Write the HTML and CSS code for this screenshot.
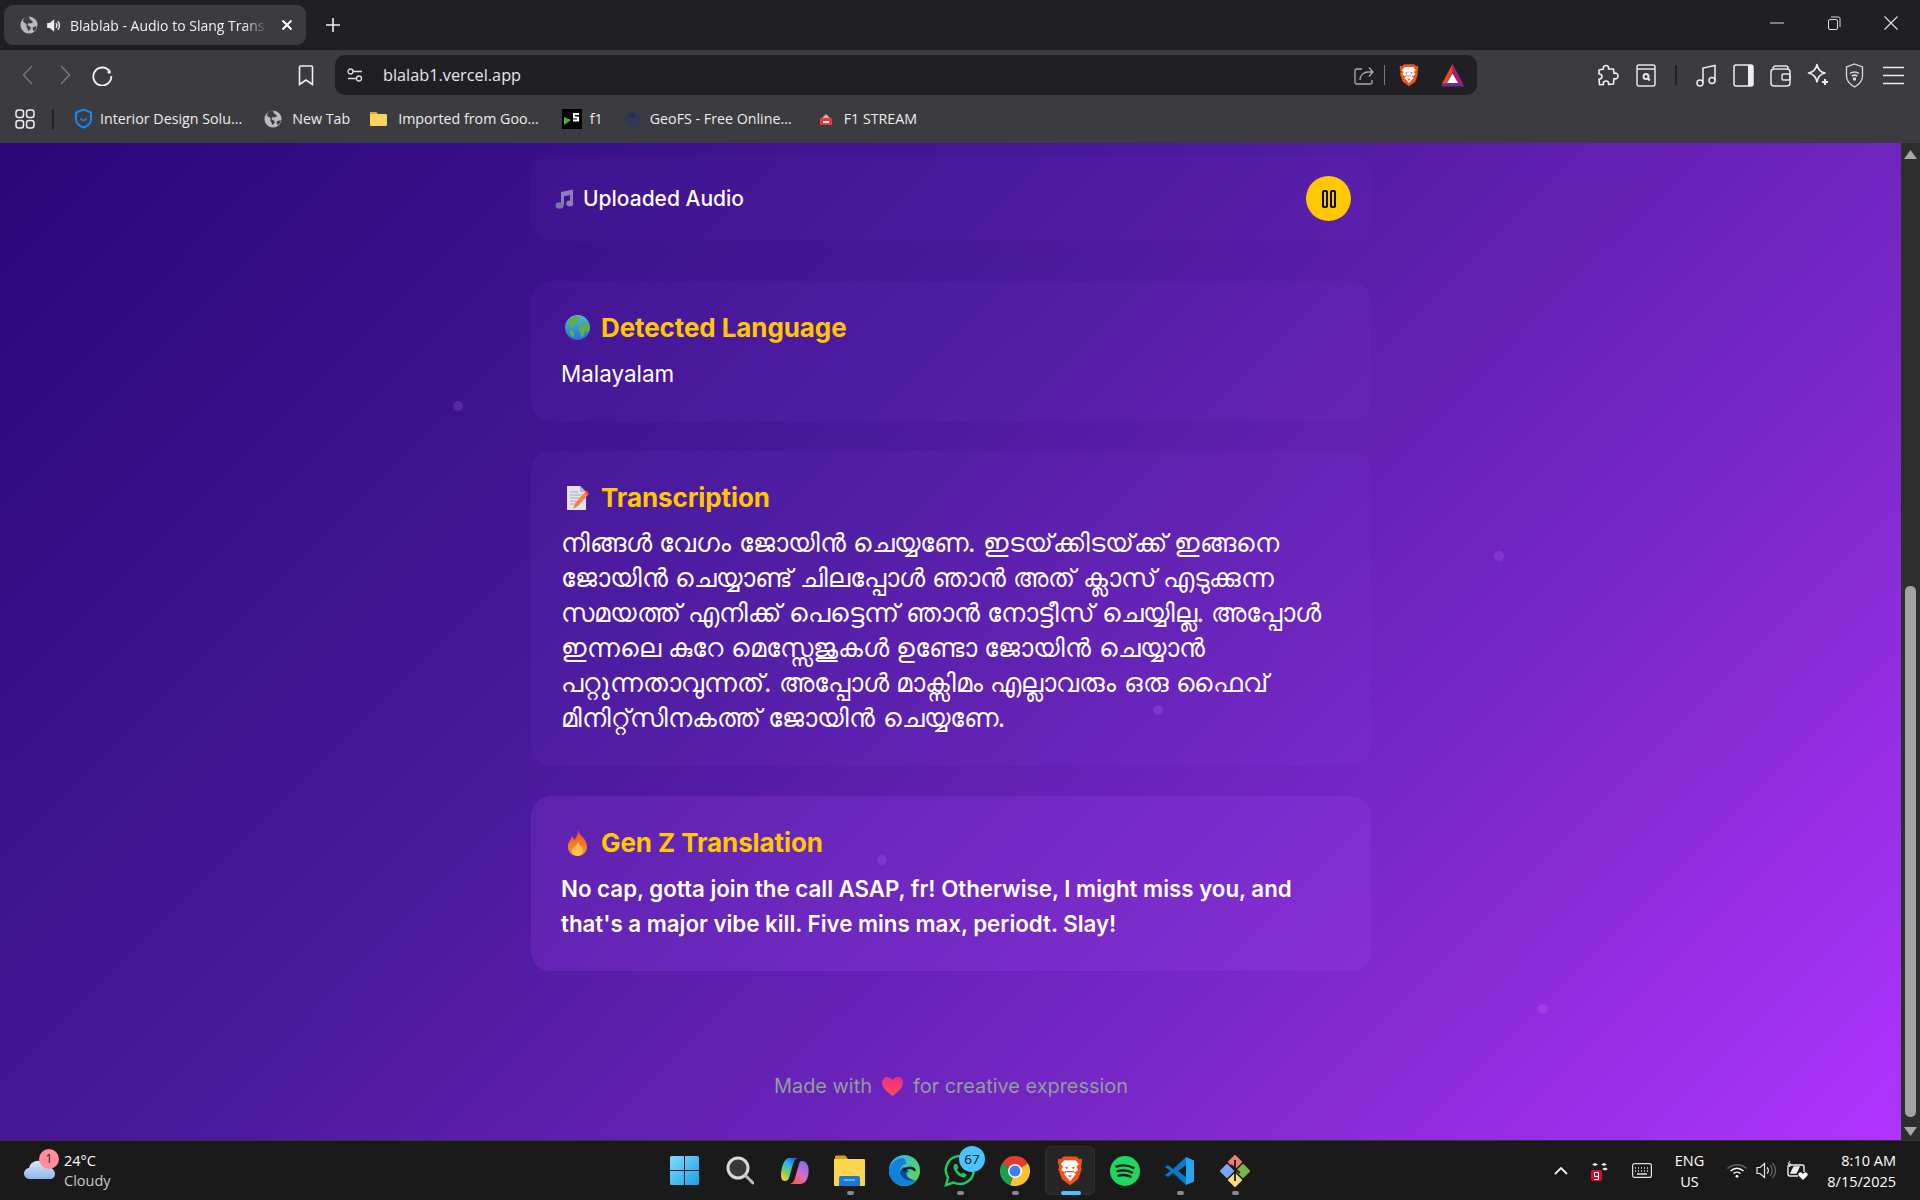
FILE: index.html
```html
<!DOCTYPE html>
<html lang="en">
<head>
<meta charset="utf-8">
<title>Blablab - Audio to Slang Translator</title>
<link rel="stylesheet" href="styles.css">
</head>
<body>
<svg class="defs" width="0" height="0" aria-hidden="true">
  <symbol id="globe" viewBox="0 0 20 20">
    <circle cx="10" cy="10" r="9.5" fill="#b9b9be"/>
    <path d="M6 1.6C4 3 3 5 3.6 6.5c.8 1.6 3 1.4 3.7 3 .5 1.2-.6 2 .3 3.2.8 1 1.2 3 2 4 1.2-.8 2.500-2.200 2.300-3.800-.2-1.300-2-1.300-3-2.400-.8-1-.2-2.300 1-2.500 1.500-.2 2.800.4 3.800-.5 1-1 .1-2.200-1-2.500C10.500 3.500 10 2.300 10.500.6 9 .4 7.300.8 6 1.600z" fill="#3c3c42"/>
    <path d="M14.500 12.500c1-.8 3-.8 4.200-1.500-.3 2.200-1.500 4.400-3.400 5.800-1-1.300-1.700-3.300-.8-4.300z" fill="#3c3c42"/>
  </symbol>
  <symbol id="brave" viewBox="0 0 24 28">
    <path d="M6 1h12l2.500 2.500 2.500-.5v4l-1 3.500.8 2-3.300 9.500L12 27.500 4.500 22 1.200 12.500l.8-2L1 7V3l2.500.5z" fill="#f1511b"/>
    <path d="M7 4.500h10l3 3.500-2 2.500 1.500 3-3 2-1.500-1h-7L7 15.500l-3-2 1.500-3-2-2.500z" fill="#fff"/>
    <path d="M8.500 15.500h7l2 2L12 24l-5.500-6.500z" fill="#fff"/>
    <path d="M10 18.500h4l-2 2z" fill="#f1511b"/>
    <path d="M7.500 10.500l3 .8-2 1.500zM16.500 10.500l-3 .8 2 1.500z" fill="#f1511b"/>
  </symbol>
</svg>

<div class="screen">
  <div class="tabstrip">
    <div class="tab">
      <svg class="tab-globe" width="18" height="18"><use href="#globe"/></svg>
      <svg class="tab-sound" width="15" height="15" viewBox="0 0 16 16" fill="none" stroke="#eee" stroke-width="1.500"><path d="M2 6h2.500L8 3v10L4.500 10H2z" fill="#eee"/><path d="M10.500 5.500a3.500 3.500 0 0 1 0 5M12.500 3.500a6.500 6.500 0 0 1 0 9"/></svg>
      <span class="tab-title">Blablab - Audio to Slang Trans</span>
      <svg class="tab-close" width="12" height="12" viewBox="0 0 12 12" stroke="#fff" stroke-width="2"><path d="M1.500 1.500l9 9M10.500 1.500l-9 9"/></svg>
    </div>
    <svg class="tab-new" width="14" height="14" viewBox="0 0 14 14" stroke="#eee" stroke-width="1.600"><path d="M7 0v14M0 7h14"/></svg>
    <div class="winctl">
      <div class="winbtn"><svg width="14" height="2" viewBox="0 0 14 2" stroke="#ddd"><path d="M0 1h14"/></svg></div>
      <div class="winbtn"><svg width="14" height="14" viewBox="0 0 14 14" fill="none" stroke="#ddd"><rect x="1.500" y="3.500" width="9" height="10" rx="1.500"/><path d="M4 1h7.500a1.500 1.500 0 0 1 1.500 1.500V11"/></svg></div>
      <div class="winbtn"><svg width="14" height="14" viewBox="0 0 14 14" stroke="#e6e6e6" stroke-width="1.100"><path d="M.5.500l13 13M13.500.500l-13 13"/></svg></div>
    </div>
  </div>

  <div class="toolbar">
    <div class="tb-btn"><svg width="11" height="20" viewBox="0 0 11 20" fill="none" stroke="#77777c" stroke-width="1.500"><path d="M10 1L1.500 10 10 19"/></svg></div>
    <div class="tb-btn"><svg width="11" height="20" viewBox="0 0 11 20" fill="none" stroke="#77777c" stroke-width="1.500"><path d="M1 1l8.500 9L1 19"/></svg></div>
    <div class="tb-btn reload"><svg width="21" height="21" viewBox="0 0 21 21" fill="none" stroke="#f2f2f2" stroke-width="1.800"><path d="M17.800 6.500A9 9 0 1 0 19.300 11"/><circle cx="17.200" cy="7" r="1.800" fill="#f2f2f2" stroke="none"/></svg></div>
    <div class="tb-btn bookmark"><svg width="16" height="21" viewBox="0 0 16 21" fill="none" stroke="#eee" stroke-width="1.600"><path d="M2.500 1h11a1 1 0 0 1 1 1v17.500L8 15l-6.500 4.500V2a1 1 0 0 1 1-1z"/></svg></div>
    <div class="urlbar">
      <svg class="url-tune" width="16" height="14" viewBox="0 0 16 14" fill="none" stroke="#ddd" stroke-width="1.300"><circle cx="3.500" cy="3.500" r="2.500"/><path d="M6 3.500h9M1 10.500h8"/><circle cx="12" cy="10.500" r="2.500"/></svg>
      <span class="url-text">blalab1.vercel.app</span>
      <svg class="url-share" width="20" height="19" viewBox="0 0 20 19" fill="none" stroke="#aaa" stroke-width="1.300"><path d="M8 3H2.500A1.500 1.500 0 0 0 1 4.500v12A1.500 1.500 0 0 0 2.500 18h14a1.500 1.500 0 0 0 1.500-1.500V14"/><path d="M6 14c0-5 4-8 8-8h5M15 1.500L19 6l-4 4.500"/></svg>
      <span class="url-div"></span>
      <svg class="url-brave" width="20" height="24"><use href="#brave"/></svg>
      <svg class="url-bat" width="23" height="24" viewBox="0 0 23 24"><path d="M11.500 1L1 23h21z" fill="#8a2a7e"/><path d="M11.500 1L1 20.500l3.500 1L11.500 9z" fill="#f1471b"/><path d="M11.500 1L22 20.500l-3.500 1L11.500 9z" fill="#b0196b"/><path d="M11.500 10.500L6 20h11z" fill="#fff"/><path d="M1 20.500h21l1 3H0z" fill="#6b2c92"/></svg>
    </div>
    <div class="tb-right">
      <div class="tb-icon"><svg width="21" height="23" viewBox="0 0 21 23" fill="none" stroke="#eee" stroke-width="1.600" stroke-linejoin="round"><path d="M8 1.500c2 0 3 1.500 2.500 3.500h5l.5 4.500c2.500-1 4 .5 4 2.500s-1.500 3.500-4 2.500l-.5 5.500-5 .5c.8-2.500-1-3.500-2.500-3.500s-3.500 1-2.500 3.500l-4 .2-.5-5.500c2-.2 3-1.200 3-2.700s-1.500-2.500-3-2.500L1 6l4.500-1C5 3 6 1.500 8 1.500z"/></svg></div>
      <div class="tb-icon"><svg width="20" height="23" viewBox="0 0 20 23" fill="none" stroke="#e6e6e6" stroke-width="1.500"><rect x="1" y="1" width="18" height="21" rx="2"/><path d="M1 5h18"/><circle cx="10" cy="12.500" r="2.500" stroke-width="2"/><path d="M12 14.500l1.800 2" stroke-width="2"/></svg></div>
      <span class="tb-div"></span>
      <div class="tb-icon"><svg width="21" height="24" viewBox="0 0 21 24" fill="none" stroke="#eee" stroke-width="1.500"><circle cx="4" cy="20" r="3"/><circle cx="16" cy="17.500" r="3"/><path d="M7 20V5l12-2.500v15"/></svg></div>
      <div class="tb-icon"><svg width="21" height="23" viewBox="0 0 21 23"><rect x="1" y="1" width="19" height="21" rx="2" fill="none" stroke="#eee" stroke-width="1.500"/><rect x="15" y="1" width="5" height="21" rx="1" fill="#eee"/></svg></div>
      <div class="tb-icon"><svg width="21" height="23" viewBox="0 0 21 23" fill="none" stroke="#e6e6e6" stroke-width="1.500"><path d="M3 4.500A2.500 2.500 0 0 1 5.500 2H16a2 2 0 0 1 2 2v1"/><rect x="1" y="5" width="19" height="17" rx="3"/><rect x="12" y="10" width="8" height="6" rx="1.500"/></svg></div>
      <div class="tb-icon"><svg width="22" height="24" viewBox="0 0 22 24" fill="none" stroke="#eee" stroke-width="1.600" stroke-linejoin="round"><path d="M10 1.500c.8 5 3 7.500 8 8.500-5 1.200-7.200 3.500-8 9-1-5.500-3.200-7.800-8.500-9C6.800 9 9 6.500 10 1.500z"/><path d="M18 16v6M15 19h6" stroke-width="2"/></svg></div>
      <div class="tb-icon"><svg width="19" height="25" viewBox="0 0 19 25" fill="none" stroke="#ddd" stroke-width="1.300"><path d="M9.500 1l8 3v9c0 5-3.500 8.500-8 11-4.500-2.500-8-6-8-11V4z"/><path d="M5 10.500c2.500-2 6.500-2 9 0M6.800 13c1.500-1 4-1 5.500 0" stroke-width="1.600"/><circle cx="9.500" cy="16" r="1" fill="#ddd"/></svg></div>
      <div class="tb-icon tb-menu"><svg width="21" height="19" viewBox="0 0 21 19" stroke="#eee" stroke-width="1.600"><path d="M0 1.500h21M0 9.500h21M0 17.500h21"/></svg></div>
    </div>
  </div>

  <div class="bookmarks">
    <svg class="bm-apps" width="20" height="20" viewBox="0 0 20 20" fill="none" stroke="#eee" stroke-width="1.500"><rect x="1" y="1" width="7.500" height="7.500" rx="2.500"/><rect x="11.500" y="1" width="7.500" height="7.500" rx="2.500"/><rect x="1" y="11.500" width="7.500" height="7.500" rx="2.500"/><rect x="11.500" y="11.500" width="7.500" height="7.500" rx="2.500"/></svg>
    <span class="bm-div"></span>
    <div class="bm bm-first"><svg width="19" height="21" viewBox="0 0 19 21" fill="none" stroke="#1a86ef" stroke-width="2"><path d="M9.500 1.500l7.500 3v7c0 3.500-3.500 6.500-7.500 8-4-1.500-7.500-4.500-7.500-8v-7z"/><path d="M6.500 10c.5 3 5.500 3 6 0" stroke-width="1.500"/></svg><span>Interior Design Solu...</span></div>
    <div class="bm bm-newtab"><svg width="18" height="18"><use href="#globe"/></svg><span>New Tab</span></div>
    <div class="bm bm-folder"><svg width="19" height="16" viewBox="0 0 19 16"><path d="M1 2a1 1 0 0 1 1-1h5l2 2h8a1 1 0 0 1 1 1v10a1 1 0 0 1-1 1H2a1 1 0 0 1-1-1z" fill="#f7d45a"/><path d="M1 2a1 1 0 0 1 1-1h5l2 2H1z" fill="#dca524"/></svg><span>Imported from Goo...</span></div>
    <div class="bm bm-f1"><svg width="20" height="20" viewBox="0 0 20 20"><rect width="20" height="20" fill="#000"/><path d="M2 8l7 3-7 5z" fill="#4caf3c"/><path d="M17 5h-5v3.500h4v3h-5" fill="none" stroke="#fff" stroke-width="2"/></svg><span>f1</span></div>
    <div class="bm bm-geo"><svg width="18" height="18" viewBox="0 0 18 18"><circle cx="9" cy="9" r="8.500" fill="#2e3a55"/><path d="M4 5c3-3 7-2 8 0-2 1-2 3-4 3S5 8 4 5z" fill="#24304a"/></svg><span>GeoFS - Free Online...</span></div>
    <div class="bm bm-stream"><svg width="16" height="16" viewBox="0 0 16 16"><path d="M2 7h12v7H2z" fill="#e23b3b"/><path d="M4 7l4-4 4 4z" fill="#f4a9a9"/><path d="M5 10h6v2H5z" fill="#fff"/></svg><span>F1 STREAM</span></div>
  </div>

  <div class="viewport">
    <main class="page">
      <span class="dot dot-a"></span>
      <span class="dot dot-b"></span>
      <span class="dot dot-c"></span>
      <span class="dot dot-d"></span>
      <span class="dot dot-e"></span>

      <section class="audio-card">
        <div class="audio-label">
          <svg class="note" width="20" height="20" viewBox="0 0 20 20"><path d="M6 3l12-2.500v13.500h-3V6L9 7.200V16H6z" fill="#8d7fb6"/><ellipse cx="4.500" cy="16.500" rx="4" ry="3.300" fill="#7d6fa8"/><ellipse cx="14.800" cy="14.500" rx="3.500" ry="3" fill="#8d7fb6"/></svg>
          <span>Uploaded Audio</span>
        </div>
        <button class="pause" type="button" aria-label="Pause"><svg width="24" height="24" viewBox="0 0 24 24" fill="none" stroke="#0a0a1a" stroke-width="2"><rect x="14" y="4" width="4" height="16" rx="1"/><rect x="6" y="4" width="4" height="16" rx="1"/></svg></button>
      </section>

      <section class="card card-lang">
        <h2 class="card-title"><span class="emoji"><svg width="25" height="25" viewBox="0 0 25 25"><defs><linearGradient id="sea" x1="0" y1="0" x2="0" y2="1"><stop offset="0" stop-color="#4fb8e8"/><stop offset="1" stop-color="#2a6fd0"/></linearGradient></defs><circle cx="12.500" cy="12.500" r="12.500" fill="url(#sea)"/><path d="M6 2.500c3-2 8-2 10 0l-1 3-3 1-1 3-3 1-1.500 3-2.500-2L3 9c0-3 1-5 3-6.500zM13 11l5-2 3-3 3 4 1 4-2 3-3-1-1 4-3 2-1-5-2-6zM5 15l3 1 1.500 5-2 1-2.500-3z" fill="#5cb04e"/></svg></span>Detected Language</h2>
        <p class="card-text">Malayalam</p>
      </section>

      <section class="card card-trans">
        <h2 class="card-title"><span class="emoji"><svg width="23" height="26" viewBox="0 0 23 26"><path d="M1 1h13l6 6v18H1z" fill="#e5e2ec"/><path d="M14 1l6 6h-6z" fill="#b9b5c6"/><path d="M4 7h8M4 10h12M4 13h10M4 16h6M4 19h4" stroke="#a9a5b8" stroke-width="1.200"/><path d="M7 24l2-6L19 7l3 3-10 11z" fill="#f5823f"/><path d="M19 7l1.500-1.500 2.500 3L22 10z" fill="#e8484a"/></svg></span>Transcription</h2>
        <p class="card-text ml">നിങ്ങൾ വേഗം ജോയിൻ ചെയ്യണേ. ഇടയ്‌ക്കിടയ്‌ക്ക് ഇങ്ങനെ<br>ജോയിൻ ചെയ്യാണ്ട് ചിലപ്പോൾ ഞാൻ അത് ക്ലാസ് എടുക്കുന്ന<br>സമയത്ത് എനിക്ക് പെട്ടെന്ന് ഞാൻ നോട്ടീസ് ചെയ്യില്ല. അപ്പോൾ<br>ഇന്നലെ കുറേ മെസ്സേജുകൾ ഉണ്ടോ ജോയിൻ ചെയ്യാൻ<br>പറ്റുന്നതാവുന്നത്. അപ്പോൾ മാക്സിമം എല്ലാവരും ഒരു ഫൈവ്<br>മിനിറ്റ്‌സിനകത്ത് ജോയിൻ ചെയ്യണേ.</p>
      </section>

      <section class="card card-genz">
        <h2 class="card-title"><span class="emoji"><svg width="21" height="26" viewBox="0 0 21 26"><defs><linearGradient id="flame" x1="0" y1="0" x2="0" y2="1"><stop offset="0" stop-color="#e8502a"/><stop offset="1" stop-color="#fb9a2c"/></linearGradient></defs><path d="M11 0c1 5 9 9 9 16.500C20 22 16 26 10.500 26S1 22 1 16.500C1 12 4 10 5 6c1 1.500 2 3 2.500 4C9.500 7 11 4 11 0z" fill="url(#flame)"/><path d="M11 12c1 3 5 4.500 5 8.500 0 3-2.500 5.500-5.500 5.500S5 23.500 5 20.500c0-3.500 5-4.500 6-8.500z" fill="#fcc24a"/></svg></span>Gen Z Translation</h2>
        <p class="card-text strong">No cap, gotta join the call ASAP, fr! Otherwise, I might miss you, and<br>that's a major vibe kill. Five mins max, periodt. Slay!</p>
      </section>

      <footer class="foot">Made with<svg class="heart" width="21" height="19" viewBox="0 0 21 19"><defs><linearGradient id="hrt" x1="0" y1="0" x2="0" y2="1"><stop offset="0" stop-color="#e8308a"/><stop offset="1" stop-color="#ff4a5a"/></linearGradient></defs><path d="M10.500 19C4 14 0 10.500 0 5.500 0 2.500 2.300 0 5.300 0c2.200 0 4.200 1.300 5.200 3.300C11.500 1.300 13.500 0 15.700 0 18.700 0 21 2.500 21 5.500 21 10.500 17 14 10.500 19z" fill="url(#hrt)"/></svg>for creative expression</footer>
    </main>
    <div class="scrollbar">
      <svg width="13" height="9" viewBox="0 0 13 9"><path d="M6.500 0L13 9H0z" fill="#a8a8a8"/></svg>
      <div class="scroll-space"><div class="scroll-thumb"></div></div>
      <svg width="13" height="9" viewBox="0 0 13 9"><path d="M6.500 9L13 0H0z" fill="#a8a8a8"/></svg>
    </div>
  </div>

  <div class="taskbar">
    <div class="weather">
      <svg class="cloud" width="32" height="20" viewBox="0 0 32 20"><defs><linearGradient id="cl" x1="0" y1="0" x2="0" y2="1"><stop offset="0" stop-color="#dbe8fb"/><stop offset="1" stop-color="#8db4ef"/></linearGradient></defs><path d="M6 20a5.500 5.500 0 0 1-1-11C6 4 11 1 16 2c3 .6 6 3 6.500 6.500C24 7.500 31 9 31 15c0 3-2.500 5-5 5z" fill="url(#cl)"/></svg>
      <span class="badge">1</span>
      <div class="weather-text"><span class="w-temp">24°C</span><span class="w-desc">Cloudy</span></div>
    </div>
    <div class="apps">
      <div class="app"><svg width="29" height="29" viewBox="0 0 29 29"><defs><linearGradient id="win" x1="0" y1="0" x2="1" y2="1"><stop offset="0" stop-color="#7fdcff"/><stop offset="1" stop-color="#1a9fe8"/></linearGradient></defs><path d="M0 1.500A1.500 1.500 0 0 1 1.500 0H14v14H0zM15 0h12.500A1.500 1.500 0 0 1 29 1.500V14H15zM0 15h14v14H1.500A1.500 1.500 0 0 1 0 27.500zM15 15h14v12.500a1.500 1.500 0 0 1-1.500 1.500H15z" fill="url(#win)"/></svg></div>
      <div class="app"><svg width="28" height="29" viewBox="0 0 28 29" fill="none"><circle cx="12" cy="12" r="10" fill="#3a3a3a" stroke="#d8d8d8" stroke-width="3"/><path d="M19.500 19.500L27 27" stroke="#bfbfbf" stroke-width="3" stroke-linecap="round"/></svg></div>
      <div class="app"><svg width="28" height="27" viewBox="0 0 28 27"><defs><linearGradient id="co1" x1="0.800" y1="0" x2="0.200" y2="1"><stop offset="0" stop-color="#1f5fd8"/><stop offset=".35" stop-color="#2fb7ee"/><stop offset=".7" stop-color="#7bd05a"/><stop offset="1" stop-color="#f6d13a"/></linearGradient><linearGradient id="co2" x1="0.800" y1="0" x2="0.200" y2="1"><stop offset="0" stop-color="#7c6cf0"/><stop offset=".5" stop-color="#d86ad0"/><stop offset="1" stop-color="#f5604a"/></linearGradient></defs><path d="M8 1h9c-3 1-4 3-5 6L8 21c-.5 2-2 3-4 3-3 0-4-3-4-6C0 12 3 1 8 1z" fill="url(#co1)"/><path d="M20 4c4 0 6 2 7 5 1 3 1 9-1 13-1 3-4 5-8 5H9c3-1 4-3 5-6l4-14c.5-1.500 1-3 2-3z" fill="url(#co2)"/></svg></div>
      <div class="app"><svg width="31" height="32" viewBox="0 0 31 32"><path d="M1 2a1.500 1.500 0 0 1 1.500-1.500h9L14 4h-13z" fill="#d69e1c"/><path d="M0 4h30a1 1 0 0 1 1 1v25a1 1 0 0 1-1 1H1a1 1 0 0 1-1-1z" fill="#fbd64f"/><path d="M5 31v-8a2 2 0 0 1 2-2h17a2 2 0 0 1 2 2v8z" fill="#1c78d2"/><path d="M10 25h11" stroke="#7cc3f5" stroke-width="1.500"/></svg></div>
      <div class="app"><svg width="31" height="31" viewBox="0 0 31 31"><defs><linearGradient id="edg" x1="0.200" y1="0" x2="1" y2="0.700"><stop offset="0" stop-color="#2fb8e6"/><stop offset="1" stop-color="#62d35c"/></linearGradient></defs><circle cx="15.500" cy="15.500" r="15.500" fill="url(#edg)"/><path d="M15 3C7 3 0 9 0 16c0 8 7 15 15 15 5 0 9-2 12-6-6 2-13 0-15.500-5.500C9.500 15 12 10 17 9c0-2-.5-4.500-2-6z" fill="#1380dc"/><path d="M11.500 19.500C14 25 21 27 27 25c-4 0-9-2-9.500-6 0-1.500 1-2.500 2.500-2.500L15 12c-3 2-5 4-3.500 7.500z" fill="#0b4a9a"/><path d="M15 15c3-3 9-3 10.500 0" fill="none" stroke="#1a1a1a" stroke-width="2.600" stroke-linecap="round"/></svg></div>
      <div class="app app-wa"><svg width="31" height="32" viewBox="0 0 31 32" fill="none"><path d="M2 30l2-7.500A14 14 0 1 1 9.500 27.500z" stroke="#22c55e" stroke-width="2.500"/><path d="M11 9c-2 1-2 4 0 7 2 3.500 5 6 8 6.500 2 .2 4-1.500 3.500-3l-3.500-2-1.500 1.500c-2-1-3.500-3-4.500-4.500l1.500-1.500-1.500-4z" fill="#22c55e"/></svg><span class="wa-badge">67</span></div>
      <div class="app"><svg width="30" height="30" viewBox="0 0 30 30"><path d="M15 15L2 7.500A15 15 0 0 1 28 7.500z" fill="#e33b2e"/><path d="M15 15L2 7.500A15 15 0 0 0 10 29.200z" fill="#1f9e4c"/><path d="M15 15l13-7.500A15 15 0 0 1 10 29.200z" fill="#f9c22e"/><circle cx="15" cy="15" r="7" fill="#fff"/><circle cx="15" cy="15" r="5.500" fill="#3d7ff0"/></svg></div>
      <div class="app app-active"><svg width="26" height="31"><use href="#brave"/></svg></div>
      <div class="app"><svg width="30" height="30" viewBox="0 0 30 30" fill="none"><circle cx="15" cy="15" r="15" fill="#1ed760"/><path d="M6.500 10.500c6-1.800 12-1.300 17 1.500M7.500 15.200c5-1.400 10-1 14.500 1.300M8.500 19.600c4-1 8.500-.8 12 1.200" stroke="#1a1a1a" stroke-width="2.400" stroke-linecap="round"/></svg></div>
      <div class="app"><svg width="30" height="30" viewBox="0 0 30 30"><path d="M21 1L8 13 3 9 0 11l5.500 4L0 19l3 2 5-4 13 12v-8l-8-6 8-6z" fill="#0a7ac8"/><path d="M21 1l8 3.500v21L21 29z" fill="#2aa4ee"/></svg></div>
      <div class="app"><svg width="30" height="32" viewBox="0 0 30 32"><g stroke-width="2" stroke-linejoin="round"><path d="M15 1l6 6-6 6-6-6z" fill="#f37a7a" stroke="#f37a7a"/><path d="M7 10l6 6-6 6-6-6z" fill="#7aa5f5" stroke="#7aa5f5"/><path d="M23 10l6 6-6 6-6-6z" fill="#7ab648" stroke="#7ab648"/><path d="M15 19l6 6-6 6-6-6z" fill="#f5dc7a" stroke="#f5dc7a"/></g><path d="M15 5v21M15 14l5 4M11 10l4 4" stroke="#1a1a1a" stroke-width="1.800" fill="none"/></svg></div>
      <span class="pip pip-files"></span>
      <span class="pip pip-wa"></span>
      <span class="pip pip-chrome"></span>
      <span class="pip pip-brave"></span>
      <span class="pip pip-code"></span>
      <span class="pip pip-git"></span>
    </div>
    <div class="tray">
      <svg class="tray-chev" width="14" height="8" viewBox="0 0 14 8" fill="none" stroke="#eee" stroke-width="1.800"><path d="M1 7l6-6 6 6"/></svg>
      <div class="tray-drop"><svg width="19" height="19" viewBox="0 0 19 19"><path d="M1 1.500L4 0l3 1.500L4 3zM10 1.500L13 0l3 1.500L13 3zM11 6l3-1.500L17 6l-3 1.500z" fill="#eee"/><rect x="0" y="7" width="11" height="11" rx="2" fill="#d60f2f"/><path d="M3.500 13.500h4v-4h-4zM7.500 13.500v3h-4" fill="none" stroke="#fff" stroke-width="1"/></svg></div>
      <svg class="tray-kb" width="20" height="15" viewBox="0 0 20 15" fill="none" stroke="#e0e0e0" stroke-width="1.200"><rect x=".6" y=".6" width="18.800" height="13.800" rx="2"/><path d="M3 5h1M6 5h1M9 5h1M12 5h1M15 5h1M3 8h1M6 8h1M9 8h1M12 8h1M15 8h1M5 11h10" stroke-width="1.300"/></svg>
      <div class="tray-lang"><span>ENG</span><span>US</span></div>
      <svg class="tray-wifi" width="20" height="15" viewBox="0 0 20 15" fill="none" stroke="#fff" stroke-width="1.500"><path d="M.5 5.500c5.500-5 13.500-5 19 0" stroke="#666"/><path d="M3.500 8c4-3.500 9-3.500 13 0M6.500 10.500c2-1.800 5-1.800 7 0"/><circle cx="10" cy="13.300" r="1.400" fill="#fff" stroke="none"/></svg>
      <svg class="tray-vol" width="20" height="17" viewBox="0 0 20 17" fill="none" stroke="#e8e8e8" stroke-width="1.200"><path d="M1 5.500h3L8.500 1.500v14L4 11.500H1z"/><path d="M11 5.500a4 4 0 0 1 0 6"/><path d="M14 3a8 8 0 0 1 0 11M16.500 1a11 11 0 0 1 0 15" stroke="#666"/></svg>
      <svg class="tray-bat" width="21" height="20" viewBox="0 0 21 20" fill="none" stroke="#eee" stroke-width="1.400"><path d="M1 6a2 2 0 0 1 2-2h12a2 2 0 0 1 2 2v5M1 6v7a2 2 0 0 0 2 2h8"/><path d="M4 12l3-6h5l-3 6z" fill="#eee"/><path d="M3 0L1 3h3L2.500 6" stroke-width="1"/><path d="M16 19l-4-4a2 2 0 0 1 3-3l1 1 1-1a2 2 0 0 1 3 3z" fill="#fff" stroke="none"/></svg>
      <div class="clock"><span>8:10 AM</span><span>8/15/2025</span></div>
    </div>
  </div>
</div>
</body>
</html>
```

FILE: styles.css
```css
* { box-sizing: border-box; }
html, body { margin: 0; height: 100%; overflow: hidden; }
body { font-family: "Open Sans", "Noto Sans", sans-serif; background: #1a1a1a; color: #fff; }
.defs { display: block; width: 0; height: 0; }
.screen { width: 1920px; height: 1200px; display: flex; flex-direction: column; }

.tabstrip { height: 50px; flex: none; background: #1f1f24; display: flex; align-items: flex-start; position: relative; padding-left: 4px; }
.tab { width: 302px; height: 40px; margin-top: 5px; border-radius: 9px; background: #3b3b40; display: flex; align-items: center; padding-left: 16px; }
.tab-sound { margin-left: 8px; }
.tab-title { margin-left: 9px; width: 198px; font-size: 14px; color: #f0f0f0; white-space: nowrap; -webkit-mask-image: linear-gradient(90deg, #000 88%, transparent); mask-image: linear-gradient(90deg, #000 88%, transparent); }
.tab-close { margin-left: 13px; }
.tab-new { margin: 18px 0 0 20px; }
.winctl { margin-left: auto; display: flex; padding-top: 16px; padding-right: 1px; }
.winbtn { width: 57px; height: 14px; display: flex; align-items: center; justify-content: center; }

.toolbar { height: 50px; flex: none; background: #3b3b40; display: flex; align-items: center; padding-left: 8px; }
.tb-btn { width: 38px; height: 40px; display: flex; align-items: center; justify-content: center; }
.reload { padding-right: 2px; }
.bookmark { margin-left: 165px; }
.urlbar { width: 1142px; height: 40px; margin-left: 10px; border-radius: 10px; background: #1f1f24; display: flex; align-items: center; padding-left: 12px; }
.url-text { margin-left: 20px; font-size: 16.300px; color: #e6e6ea; }
.url-share { margin-left: auto; }
.url-div { width: 1px; height: 20px; background: #777; margin-left: 10px; }
.url-brave { margin-left: 14px; }
.url-bat { margin-left: 22px; margin-right: 13px; }
.tb-right { display: flex; align-items: center; margin-left: 113px; }
.tb-icon { width: 37px; height: 30px; display: flex; align-items: center; justify-content: center; }
.tb-div { width: 2px; height: 20px; background: #222226; margin: 0 12px 0 11px; }
.tb-div + .tb-icon { margin-left: -1px; }
.tb-menu { margin-left: 2px; }

.bookmarks { height: 43px; flex: none; background: #3b3b40; display: flex; align-items: center; padding-left: 15px; font-size: 14.250px; color: #ececec; padding-bottom: 6px; }
.bm { display: flex; align-items: center; gap: 8px; white-space: nowrap; }
.bm-div { width: 2px; height: 20px; background: #222226; margin-left: 17px; }
.bm-first { margin-left: 20px; gap: 7px; }
.bm-newtab { margin-left: 22px; gap: 10px; }
.bm-folder { margin-left: 19px; gap: 10px; }
.bm-f1 { margin-left: 23px; }
.bm-geo { margin-left: 21px; }
.bm-stream { margin-left: 26px; gap: 10px; }

.viewport { flex: 1; display: flex; min-height: 0; }
.page { width: 1901px; position: relative; overflow: hidden; padding: 13px 530px 0 531px; background: linear-gradient(135deg, #2a0678 0%, #4c1a9e 42%, #7a28c8 72%, #b034ff 100%); font-family: "Inter", sans-serif; }
.dot { position: absolute; width: 10px; height: 10px; border-radius: 50%; background: rgba(220, 120, 255, 0.2); }
.dot-a { left: 453px; top: 258px; }
.dot-b { left: 1494px; top: 408px; }
.dot-c { left: 1153px; top: 562px; }
.dot-d { left: 877px; top: 712px; }
.dot-e { left: 1538px; top: 861px; }

.audio-card { height: 85px; border-radius: 20px; background: rgba(150, 80, 255, 0.05); display: flex; align-items: center; justify-content: space-between; padding: 0 20px; margin-bottom: 40px; position: relative; }
.audio-label { display: flex; align-items: center; font-size: 21px; font-weight: 500; }
.note { margin: 0 8px 0 4px; }
.pause { width: 45px; height: 45px; border-radius: 50%; border: 0; padding: 0; background: #ffc800; display: flex; align-items: center; justify-content: center; }

.card { border-radius: 20px; padding: 30px; margin-bottom: 30px; background: rgba(150, 80, 255, 0.07); position: relative; }
.card-genz { background: rgba(170, 80, 255, 0.18); }
.card-title { margin: 0 0 11px; height: 34px; padding-bottom: 1px; display: flex; align-items: center; font-size: 26px; font-weight: 700; letter-spacing: -.1px; color: #ffc800; white-space: nowrap; }
.emoji { width: 32px; margin-right: 8px; display: flex; justify-content: center; }
.card-text { margin: 0; font-size: 22.400px; line-height: 35px; font-weight: 400; white-space: nowrap; }
.card-text.ml { font-size: 26px; margin-top: -1px; margin-bottom: 1px; }
.card-text.strong { font-size: 22.300px; font-weight: 600; }
.foot { margin-top: 99px; display: flex; align-items: center; justify-content: center; height: 32px; font-size: 19.900px; color: #8f9e9e; }
.heart { margin: 0 10px; }

.scrollbar { width: 19px; background: #2e2e2e; display: flex; flex-direction: column; align-items: center; padding: 7px 0 4px; }
.scroll-space { flex: 1; width: 11px; padding-top: 427px; padding-bottom: 10px; display: flex; flex-direction: column; }
.scroll-thumb { flex: 1; border-radius: 5px; background: #a3a3a3; }

.taskbar { height: 60px; flex: none; background: #1a1a1a; border-top: 1px solid #333; position: relative; display: flex; align-items: center; }
.weather { display: flex; align-items: center; position: relative; width: 650px; padding-left: 24px; }
.cloud { flex: none; margin-top: -3px; }
.badge { position: absolute; left: 39px; top: -2px; width: 20px; height: 20px; border-radius: 50%; background: #ff8d9c; color: #1a1a1a; font-size: 12px; display: flex; align-items: center; justify-content: center; }
.weather-text { display: flex; flex-direction: column; margin-left: 8px; font-size: 14.500px; line-height: 20px; }
.w-desc { color: #c8c8c8; }
.apps { display: flex; position: relative; height: 58px; align-items: center; }
.app { width: 55px; height: 49px; display: flex; align-items: center; justify-content: center; position: relative; margin-left: 0; }
.app:first-child { margin-left: 7px; }
.app-active { background: #262626; border-radius: 6px; border: 1px solid #2f2f2f; width: 50px; margin: 0 2.500px; }
.wa-badge { position: absolute; left: 27px; top: 0; width: 26px; height: 26px; border-radius: 50%; background: #4cc2ff; color: #111; font-size: 13.500px; display: flex; align-items: center; justify-content: center; }
.pip { position: absolute; bottom: 5px; width: 7px; height: 4px; border-radius: 2px; background: #8a8a8a; }
.pip-files { left: 197px; }
.pip-wa { left: 307px; }
.pip-chrome { left: 362px; }
.pip-brave { left: 411px; width: 20px; background: #4cc2ff; }
.pip-code { left: 527px; }
.pip-git { left: 582px; }
.tray { flex: 1; display: flex; align-items: center; height: 58px; position: relative; }
.tray-chev { margin-left: 291.500px; }
.tray-drop { margin-left: 23px; display: flex; margin-top: 3px; }
.tray-kb { margin-left: 22px; }
.tray-lang { width: 50px; margin-left: 13px; display: flex; flex-direction: column; align-items: center; font-size: 14.500px; line-height: 21px; }
.tray-wifi { margin-left: 12px; }
.tray-vol { margin-left: 9px; }
.tray-bat { margin-left: 11px; }
.clock { margin-left: auto; margin-right: 24px; display: flex; flex-direction: column; align-items: flex-end; font-size: 14.500px; line-height: 21px; }
```
